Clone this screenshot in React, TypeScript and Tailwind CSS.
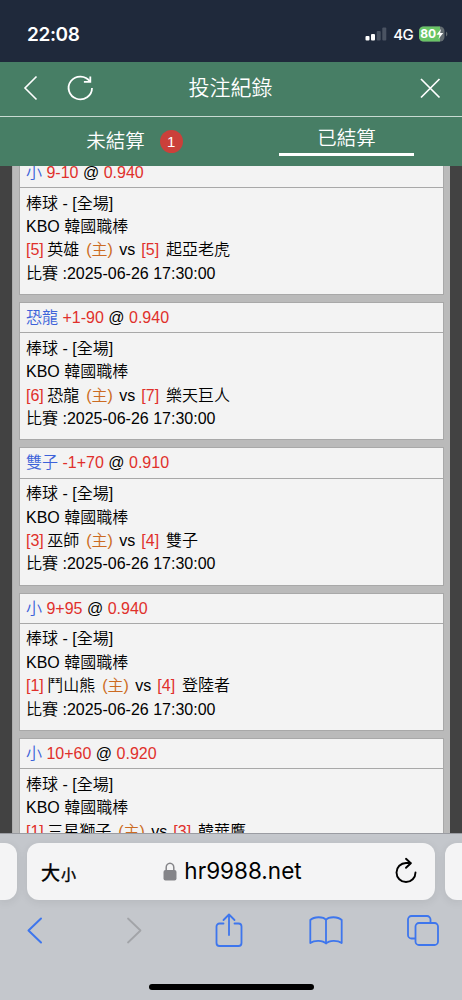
import React, { useState } from 'react';

type Bet = {
  pick: string;
  line: string;
  odds: string;
  homeRank: number;
  home: string;
  awayRank: number;
  away: string;
};

const bets: Bet[] = [
  { pick: '小', line: '9-10', odds: '0.940', homeRank: 5, home: '英雄', awayRank: 5, away: '起亞老虎' },
  { pick: '恐龍', line: '+1-90', odds: '0.940', homeRank: 6, home: '恐龍', awayRank: 7, away: '樂天巨人' },
  { pick: '雙子', line: '-1+70', odds: '0.910', homeRank: 3, home: '巫師', awayRank: 4, away: '雙子' },
  { pick: '小', line: '9+95', odds: '0.940', homeRank: 1, home: '鬥山熊', awayRank: 4, away: '登陸者' },
  { pick: '小', line: '10+60', odds: '0.920', homeRank: 1, home: '三星獅子', awayRank: 3, away: '韓華鷹' },
];

function StatusBar() {
  return (
    <div className="h-[61.5px] shrink-0 bg-[#1f293b] flex items-center justify-between pl-[27px] pr-[14px] pt-[7px] text-white font-['Inter','Liberation_Sans',sans-serif]">
      <span className="text-[19px] font-semibold leading-none tracking-[-0.4px]">22:08</span>
      <div className="flex items-center">
        <svg width="22" height="14" viewBox="0 0 22 14" className="mr-[6px]">
          <rect x="0.5" y="9" width="4" height="4.5" rx="1" fill="#fff" />
          <rect x="6" y="7" width="4" height="6.5" rx="1" fill="#fff" />
          <rect x="11.7" y="4" width="4" height="9.5" rx="1" fill="#4a5362" />
          <rect x="17.3" y="0.5" width="4" height="13" rx="1" fill="#4a5362" />
        </svg>
        <span className="text-[15px] font-medium leading-none tracking-[-0.6px] mr-[6px]">4G</span>
        <svg width="29" height="16" viewBox="0 0 29 16">
          <rect x="0" y="0.5" width="25.5" height="15" rx="4.5" fill="#626b70" />
          <path d="M4.5 0.5H21v15H4.5A4.5 4.5 0 0 1 0 11V5A4.5 4.5 0 0 1 4.5 .5z" fill="#69c466" />
          <path d="M27 5.5v5q1.4-.8 1.4-2.5T27 5.5z" fill="#626b70" />
          <text x="1.3" y="12.2" fontSize="12" fontWeight="700" fill="#fff" className="font-['Inter','Liberation_Sans',sans-serif]">80</text>
          <path d="M22 3l-4.5 5.7h3L19.5 13l4.7-5.9h-3z" fill="#fff" />
        </svg>
      </div>
    </div>
  );
}

function NavBar() {
  return (
    <div className="h-[55.5px] shrink-0 border-b border-[#c9dbd2] flex items-center justify-between px-[21px] pb-[2px]">
      <div className="flex items-center w-[100px]">
        <button className="mr-[23px]">
          <svg width="20" height="26" viewBox="0 0 20 26" fill="none" stroke="#fff" strokeWidth="1.6">
            <path d="M15.5 1.5L4 13l11.5 11.5" />
          </svg>
        </button>
        <button>
          <svg width="30" height="28" viewBox="0 0 30 28" fill="none" stroke="#fff" strokeWidth="1.8">
            <path d="M28 14A11.7 11.4 0 1 1 26 7.6" />
            <path d="M26.3 2.4v5.4h-6.4" />
          </svg>
        </button>
      </div>
      <h1 className="text-[21px] leading-none font-[350] mr-px">投注紀錄</h1>
      <div className="flex justify-end w-[100px]">
        <button>
          <svg width="22" height="22" viewBox="0 0 22 22" fill="none" stroke="#fff" strokeWidth="1.7">
            <path d="M2 2l18.5 18.5M20.5 2L2 20.5" />
          </svg>
        </button>
      </div>
    </div>
  );
}

function BetCard({ bet }: { bet: Bet }) {
  return (
    <div className="h-[138.3px] shrink-0 mb-[7px] border border-[#a8a8a8] bg-[#f3f3f3] text-black">
      <div className="h-[30.3px] border-b border-[#a8a8a8] pl-[6px] leading-[29px]">
        <span className="text-[#3c62d9]">{bet.pick}</span>{' '}
        <span className="text-[#e0302b]">{bet.line}</span> @{' '}
        <span className="text-[#e0302b]">{bet.odds}</span>
      </div>
      <div className="pl-[6px] pt-[3.5px] leading-[23.4px]">
        <p>棒球 - [全場]</p>
        <p>KBO 韓國職棒</p>
        <p>
          <span className="text-[#e0302b] -mr-px">[{bet.homeRank}]</span> {bet.home}{' '}
          <span className="text-[#cc6b22] ml-[2.5px] mr-[2px]">(主)</span> vs{' '}
          <span className="text-[#e0302b] ml-[1.5px] mr-[2.5px]">[{bet.awayRank}]</span> {bet.away}
        </p>
        <p>比賽 :2025-06-26 17:30:00</p>
      </div>
    </div>
  );
}

function BrowserBar() {
  return (
    <div className="h-[167px] shrink-0 bg-[#c4c7cc] border-t border-[#9a9ca2] flex flex-col">
      {/* Address bar with the neighbouring tabs peeking in */}
      <div className="flex justify-between mt-[9px] h-[57px]">
        <div className="w-[17px] rounded-r-[12px] bg-[#f4f4f5] shadow-[0_2px_10px_rgba(0,0,0,0.08)]" />
        <div className="w-[408px] rounded-[12px] bg-[#f4f4f5] shadow-[0_2px_10px_rgba(0,0,0,0.08)] flex items-center justify-between pl-[14px] pr-[17px] text-black">
          <div className="w-[50px] flex items-baseline gap-px leading-none font-normal pt-[3px] [-webkit-text-stroke:0.4px_black]">
            <span className="text-[19px]">大</span>
            <span className="text-[15px]">小</span>
          </div>
          <div className="flex items-center gap-[7px] font-normal font-['Inter','Liberation_Sans',sans-serif]">
            <svg width="14" height="19" viewBox="0 0 14 19">
              <path d="M3.2 9V5.5a3.8 4.3 0 0 1 7.6 0V9" fill="none" stroke="#858589" strokeWidth="1.5" />
              <rect x="0.5" y="8" width="13" height="10.5" rx="2" fill="#858589" />
            </svg>
            <span className="text-[22.5px] leading-none">hr9988.net</span>
          </div>
          <div className="w-[44px] flex justify-end">
            <svg width="24" height="28" viewBox="0 0 24 28" fill="none" stroke="#000" strokeWidth="1.9" strokeLinecap="round" strokeLinejoin="round" className="-mt-[2px]">
              <path d="M21.5 15.5A9.5 9.5 0 1 1 12 6h4.5" />
              <path d="M12 1.8L16.8 6.2L12 10.8" />
            </svg>
          </div>
        </div>
        <div className="w-[17px] rounded-l-[12px] bg-[#f4f4f5] shadow-[0_2px_10px_rgba(0,0,0,0.08)]" />
      </div>
      <div className="h-[59px] pl-[19px] pr-[22px] flex items-center justify-between text-[#3e76ed]">
        <svg width="32" height="36" viewBox="0 0 32 36" fill="none" stroke="currentColor" strokeWidth="2" strokeLinecap="round" strokeLinejoin="round">
          <path d="M22 6.5L9.5 18.5L22 30.5" />
        </svg>
        <svg width="36" height="36" viewBox="0 0 36 36" fill="none" stroke="#a2a4a8" strokeWidth="1.8" strokeLinecap="round" strokeLinejoin="round">
          <path d="M15 6.5L27.5 18.5L15 30.5" />
        </svg>
        <svg width="30" height="36" viewBox="0 0 30 36" fill="none" stroke="currentColor" strokeWidth="1.8" strokeLinecap="round" strokeLinejoin="round" className="ml-[3px]">
          <path d="M9.5 11.5H5.5a3 3 0 0 0-3 3V31a3 3 0 0 0 3 3h19a3 3 0 0 0 3-3V14.5a3 3 0 0 0-3-3h-4" />
          <path d="M15 23V2.5M9.5 8L15 2.5L20.5 8" />
        </svg>
        <svg width="36" height="36" viewBox="0 0 36 36" fill="none" stroke="currentColor" strokeWidth="1.8" strokeLinejoin="round" className="ml-[2px]">
          <path d="M18 8C15.5 4.3 6 4.3 2.3 8v23c4-3 12.5-3 15.7.5c3.2-3.5 11.7-3.5 15.7-.5V8C30 4.3 20.5 4.3 18 8zV31.5" />
        </svg>
        <svg width="34" height="36" viewBox="0 0 34 36" fill="none" stroke="currentColor" strokeWidth="1.8">
          <path d="M9.5 26.5H5.5A3.5 3.5 0 0 1 2 23V7.5A3.5 3.5 0 0 1 5.5 4H21a3.5 3.5 0 0 1 3.5 3.5V11" />
          <rect x="9.5" y="11" width="22.5" height="22" rx="3.5" />
        </svg>
      </div>
      <div className="mt-auto mb-[10px] mx-auto w-[165px] h-[6px] rounded-full bg-black" />
    </div>
  );
}

export default function App() {
  const [activeTab, setActiveTab] = useState('settled');

  const tabs = [
    { id: 'open', label: '未結算', badge: 1 },
    { id: 'settled', label: '已結算', badge: null },
  ];

  return (
    <div className="w-[462px] h-[1000px] overflow-hidden flex flex-col text-[16px] font-[350] font-['Liberation_Sans','Noto_Sans_CJK_TC',sans-serif]">
      <StatusBar />

      {/* Header */}
      <header className="shrink-0 bg-[#477e65] text-white">
        <NavBar />
        <div className="h-[49px] flex">
          {tabs.map((tab) => (
            <button
              key={tab.id}
              onClick={() => setActiveTab(tab.id)}
              className="w-1/2 flex justify-center"
            >
              <span
                className={`flex items-center justify-center w-[135px] text-[19.5px] leading-none whitespace-nowrap ${
                  activeTab === tab.id ? 'h-[39px] pt-[7px] border-b-[3.5px] border-white' : 'h-[49px]'
                }`}
              >
                {tab.label}
                {tab.badge && (
                  <span className="ml-[15px] -mr-[38px] w-[23px] h-[23px] rounded-full bg-[#cb403a] text-[15px] flex items-center justify-center">
                    {tab.badge}
                  </span>
                )}
              </span>
            </button>
          ))}
        </div>
      </header>

      {/* Bet list, scrolled so the first card is cut off */}
      <main className="flex-1 min-h-0 overflow-hidden bg-[#424242] px-[12px]">
        <div className="h-full overflow-hidden bg-[#bababa] border-l border-[#adadad] pl-[6px] pr-[6.5px]">
          <div className="flex flex-col -mt-[9.3px]">
            {bets.map((bet, i) => (
              <BetCard key={i} bet={bet} />
            ))}
          </div>
        </div>
      </main>

      <BrowserBar />
    </div>
  );
}
